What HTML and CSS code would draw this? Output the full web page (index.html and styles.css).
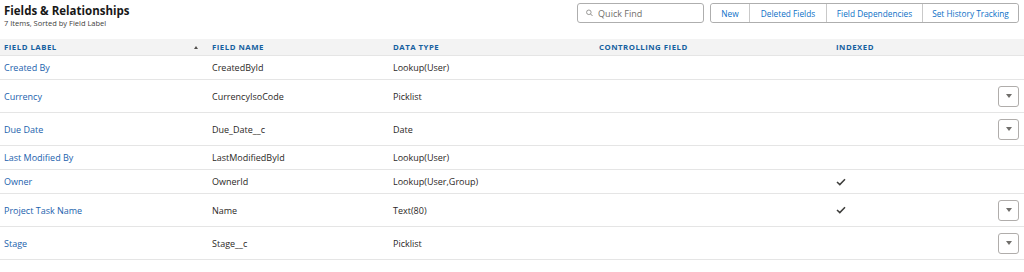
FILE: index.html
```html
<!DOCTYPE html>
<html lang="en">

<head>
    <meta charset="UTF-8">
    <title>Fields &amp; Relationships</title>
    <link rel="stylesheet" href="styles.css">
</head>

<body>
    <div class="list-header">
        <div class="list-title">
            <h1>Fields &amp; Relationships</h1>
            <p>7 Items, Sorted by Field Label</p>
        </div>
        <div class="list-actions">
            <label class="quick-find">
                <svg width="8" height="8" viewBox="0 0 10 10">
                    <circle cx="4" cy="4" r="3.2" fill="none" stroke="#8a8886" stroke-width="1.2"/>
                    <line x1="6.4" y1="6.4" x2="9.2" y2="9.2" stroke="#8a8886" stroke-width="1.3"/>
                </svg>
                <input type="text" placeholder="Quick Find">
            </label>
            <div class="button-group">
                <button>New</button>
                <button>Deleted Fields</button>
                <button>Field Dependencies</button>
                <button>Set History Tracking</button>
            </div>
        </div>
    </div>

    <table class="fields-table">
        <colgroup>
            <col class="col-label">
            <col class="col-name">
            <col class="col-type">
            <col class="col-control">
            <col class="col-indexed">
            <col class="col-action">
        </colgroup>
        <thead>
            <tr>
                <th>
                    <div class="sortable">
                        <span>Field Label</span>
                        <span class="sort-arrow"></span>
                    </div>
                </th>
                <th>Field Name</th>
                <th>Data Type</th>
                <th>Controlling Field</th>
                <th>Indexed</th>
                <th></th>
            </tr>
        </thead>
        <tbody>
            <tr>
                <td><a href="#">Created By</a></td>
                <td>CreatedById</td>
                <td>Lookup(User)</td>
                <td></td>
                <td></td>
                <td></td>
            </tr>
            <tr class="has-menu">
                <td><a href="#">Currency</a></td>
                <td>CurrencyIsoCode</td>
                <td>Picklist</td>
                <td></td>
                <td></td>
                <td><button class="row-menu"><span></span></button></td>
            </tr>
            <tr class="has-menu">
                <td><a href="#">Due Date</a></td>
                <td>Due_Date__c</td>
                <td>Date</td>
                <td></td>
                <td></td>
                <td><button class="row-menu"><span></span></button></td>
            </tr>
            <tr>
                <td><a href="#">Last Modified By</a></td>
                <td>LastModifiedById</td>
                <td>Lookup(User)</td>
                <td></td>
                <td></td>
                <td></td>
            </tr>
            <tr>
                <td><a href="#">Owner</a></td>
                <td>OwnerId</td>
                <td>Lookup(User,Group)</td>
                <td></td>
                <td>
                    <svg class="check" width="10" height="8" viewBox="0 0 10 8">
                        <polyline points="1,4 3.8,6.6 9,1.2" fill="none" stroke="#3e3e3c" stroke-width="1.5"/>
                    </svg>
                </td>
                <td></td>
            </tr>
            <tr class="has-menu">
                <td><a href="#">Project Task Name</a></td>
                <td>Name</td>
                <td>Text(80)</td>
                <td></td>
                <td>
                    <svg class="check" width="10" height="8" viewBox="0 0 10 8">
                        <polyline points="1,4 3.8,6.6 9,1.2" fill="none" stroke="#3e3e3c" stroke-width="1.5"/>
                    </svg>
                </td>
                <td><button class="row-menu"><span></span></button></td>
            </tr>
            <tr class="has-menu">
                <td><a href="#">Stage</a></td>
                <td>Stage__c</td>
                <td>Picklist</td>
                <td></td>
                <td></td>
                <td><button class="row-menu"><span></span></button></td>
            </tr>
        </tbody>
    </table>
</body>
</html>
```

FILE: styles.css
```css
body {
    font-family: 'Open Sans', sans-serif;
    margin: 0;
    padding: 0;
    background-color: #fff;
    color: #2b2826;
    font-size: 9px;
}

.list-header {
    display: flex;
    justify-content: space-between;
    align-items: flex-start;
    height: 39px;
    padding: 3px 5px 0 4px;
    box-sizing: border-box;
}

.list-title h1 {
    margin: 0;
    font-size: 11.5px;
    line-height: 15px;
    font-weight: 700;
    color: #181818;
}

.list-title p {
    margin: 0;
    font-size: 7.5px;
    line-height: 10px;
    color: #3e3e3c;
}

.list-actions {
    display: flex;
    gap: 6px;
}

.quick-find {
    display: flex;
    align-items: center;
    gap: 5px;
    width: 127px;
    height: 20px;
    padding: 0 8px;
    border: 1px solid #aeaeae;
    border-radius: 3px;
    box-sizing: border-box;
}

.quick-find input {
    border: none;
    outline: none;
    padding: 0;
    width: 100%;
    font-family: inherit;
    font-size: 9px;
    color: #181818;
}

.quick-find input::placeholder {
    color: #706e6b;
}

.button-group {
    display: flex;
    height: 20px;
    border: 1px solid #aeaeae;
    border-radius: 3px;
    box-sizing: border-box;
}

.button-group button {
    background: #fff;
    border: none;
    border-left: 1px solid #c9c9c9;
    padding: 0;
    font-family: inherit;
    font-size: 8.3px;
    color: #0b6fc7;
    cursor: pointer;
}

.button-group button:first-child {
    border-left: none;
    width: 38px;
    border-radius: 3px 0 0 3px;
}

.button-group button:nth-child(2) {
    width: 77px;
}

.button-group button:nth-child(3) {
    width: 96px;
}

.button-group button:last-child {
    width: 96px;
    border-radius: 0 3px 3px 0;
}

.fields-table {
    width: 100%;
    border-collapse: collapse;
    table-layout: fixed;
}

.col-label { width: 208px; }
.col-name { width: 181px; }
.col-type { width: 206px; }
.col-control { width: 237px; }
.col-indexed { width: 160px; }

.fields-table th {
    background-color: #f3f3f3;
    height: 16px;
    padding: 0 0 0 4px;
    text-align: left;
    font-size: 7.8px;
    font-weight: 700;
    letter-spacing: 0.5px;
    text-transform: uppercase;
    color: #15609f;
    border-bottom: 1px solid #e5e5e5;
}

.sortable {
    display: flex;
    justify-content: space-between;
    align-items: center;
    padding-right: 10px;
}

.sort-arrow {
    width: 0;
    height: 0;
    border-left: 2.5px solid transparent;
    border-right: 2.5px solid transparent;
    border-bottom: 3px solid #514f4d;
}

.fields-table td {
    height: 23px;
    padding: 0 0 0 4px;
    border-bottom: 1px solid #e5e5e5;
    vertical-align: middle;
    white-space: nowrap;
}

.fields-table tr.has-menu td {
    height: 32px;
}

.fields-table td:last-child {
    text-align: right;
    padding-right: 5px;
}

.fields-table a {
    color: #1b62ad;
    text-decoration: none;
}

.check {
    display: block;
}

.row-menu {
    width: 21px;
    height: 21px;
    padding: 0;
    background: #fff;
    border: 1px solid #b0adab;
    border-radius: 3px;
    display: inline-flex;
    justify-content: center;
    align-items: center;
    vertical-align: middle;
    cursor: pointer;
}

.row-menu span {
    width: 0;
    height: 0;
    border-left: 3.5px solid transparent;
    border-right: 3.5px solid transparent;
    border-top: 4px solid #706e6b;
}
```
